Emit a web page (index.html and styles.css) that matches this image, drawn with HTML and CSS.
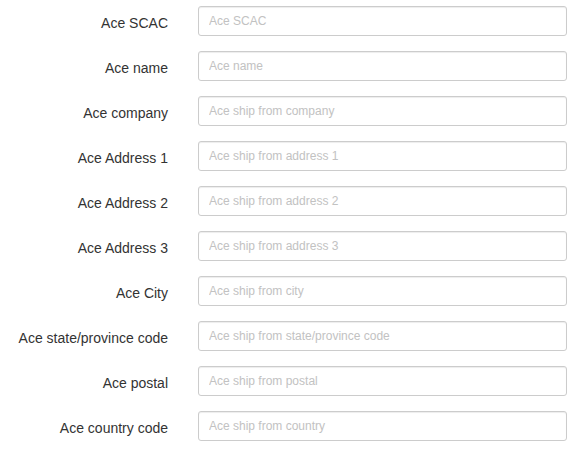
FILE: index.html
```html
<!DOCTYPE html>
<html>
<head>
<meta charset="utf-8">
<link rel="stylesheet" href="styles.css">
</head>
<body>
<form class="form">
  <div class="row"><label class="label">Ace SCAC</label><input class="field" placeholder="Ace SCAC"></div>
  <div class="row"><label class="label">Ace name</label><input class="field" placeholder="Ace name"></div>
  <div class="row"><label class="label">Ace company</label><input class="field" placeholder="Ace ship from company"></div>
  <div class="row"><label class="label">Ace Address 1</label><input class="field" placeholder="Ace ship from address 1"></div>
  <div class="row"><label class="label">Ace Address 2</label><input class="field" placeholder="Ace ship from address 2"></div>
  <div class="row"><label class="label">Ace Address 3</label><input class="field" placeholder="Ace ship from address 3"></div>
  <div class="row"><label class="label">Ace City</label><input class="field" placeholder="Ace ship from city"></div>
  <div class="row"><label class="label">Ace state/province code</label><input class="field" placeholder="Ace ship from state/province code"></div>
  <div class="row"><label class="label">Ace postal</label><input class="field" placeholder="Ace ship from postal"></div>
  <div class="row"><label class="label">Ace country code</label><input class="field" placeholder="Ace ship from country"></div>
</form>
</body>
</html>
```
FILE: styles.css
```css
html, body {
  margin: 0;
  padding: 0;
  background: #fff;
}
body {
  font-family: "Liberation Sans", Arial, sans-serif;
  color: #333;
}
.form {
  margin: 0;
  padding-top: 6px;
}
.row {
  display: grid;
  grid-template-columns: 168px 369px;
  column-gap: 30px;
  margin-bottom: 15px;
}
.label {
  text-align: right;
  font-size: 14px;
  line-height: 20px;
  padding-top: 7px;
  color: #333;
  white-space: nowrap;
}
.field {
  box-sizing: border-box;
  height: 30px;
  width: 369px;
  margin: 0;
  padding: 5px 10px;
  font-family: "Liberation Sans", Arial, sans-serif;
  font-size: 12px;
  line-height: 1.5;
  color: #555;
  background: #fff;
  border: 1px solid #ccc;
  border-radius: 3px;
  box-shadow: inset 0 1px 1px rgba(0, 0, 0, 0.075);
  outline: none;
}
.field::placeholder {
  color: #c2c2c2;
  opacity: 1;
}
```
